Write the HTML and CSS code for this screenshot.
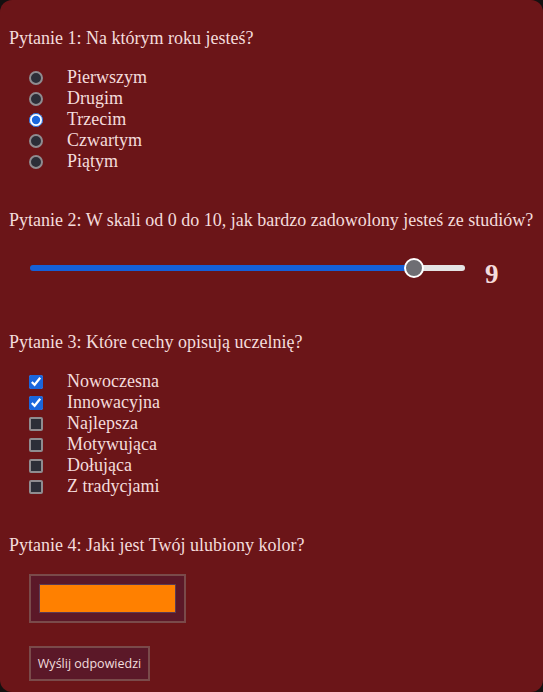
FILE: index.html
```html
<!DOCTYPE html>
<html lang="pl">
<head>
<meta charset="utf-8">
<title>Ankieta</title>
<link rel="stylesheet" href="styles.css">
</head>
<body>
<form class="page">
  <section class="q">
    <p class="q-title">Pytanie 1: Na którym roku jesteś?</p>
    <div class="options">
      <label class="opt"><input type="radio" name="rok" class="radio"><span>Pierwszym</span></label>
      <label class="opt"><input type="radio" name="rok" class="radio"><span>Drugim</span></label>
      <label class="opt"><input type="radio" name="rok" class="radio" checked><span>Trzecim</span></label>
      <label class="opt"><input type="radio" name="rok" class="radio"><span>Czwartym</span></label>
      <label class="opt"><input type="radio" name="rok" class="radio"><span>Piątym</span></label>
    </div>
  </section>
  <section class="q">
    <p class="q-title">Pytanie 2: W skali od 0 do 10, jak bardzo zadowolony jesteś ze studiów?</p>
    <div class="range-row">
      <input type="range" class="range" min="0" max="10" value="9" style="--fill: 88%">
      <span class="range-value">9</span>
    </div>
  </section>
  <section class="q">
    <p class="q-title">Pytanie 3: Które cechy opisują uczelnię?</p>
    <div class="options">
      <label class="opt"><input type="checkbox" class="check" checked><span>Nowoczesna</span></label>
      <label class="opt"><input type="checkbox" class="check" checked><span>Innowacyjna</span></label>
      <label class="opt"><input type="checkbox" class="check"><span>Najlepsza</span></label>
      <label class="opt"><input type="checkbox" class="check"><span>Motywująca</span></label>
      <label class="opt"><input type="checkbox" class="check"><span>Dołująca</span></label>
      <label class="opt"><input type="checkbox" class="check"><span>Z tradycjami</span></label>
    </div>
  </section>
  <section class="q q-last">
    <p class="q-title">Pytanie 4: Jaki jest Twój ulubiony kolor?</p>
    <div class="color-wrap">
      <input type="color" class="color" value="#ff8000">
    </div>
  </section>
  <div class="actions">
    <button type="button" class="submit">Wyślij odpowiedzi</button>
  </div>
</form>
</body>
</html>
```
FILE: styles.css
```css
html, body {
  margin: 0;
  padding: 0;
  background: #141010;
}

.page {
  box-sizing: border-box;
  min-height: 692px;
  margin: 0;
  padding: 28px 9px 10px;
  background: #6b1518;
  border-radius: 12px;
  color: #f4dcdc;
  font-family: "Liberation Serif", "Times New Roman", serif;
  font-size: 18px;
  line-height: 21px;
  color-scheme: dark;
  accent-color: #1a66dd;
}

.q {
  display: flex;
  flex-direction: column;
  margin-bottom: 38px;
}

.q-last {
  margin-bottom: 23px;
}

.q-title {
  margin: 0 0 18px;
}

.options {
  display: flex;
  flex-direction: column;
  padding-left: 20px;
}

.opt {
  display: flex;
  align-items: center;
  height: 21px;
}

.opt span {
  margin-left: 24px;
}

.radio,
.check {
  box-sizing: border-box;
  width: 14px;
  height: 14px;
  margin: 0;
}

.radio:not(:checked),
.check:not(:checked) {
  -webkit-appearance: none;
  appearance: none;
  border: 2px solid #8f8c90;
  background: #2c2e38;
}

.radio:not(:checked) {
  border-radius: 50%;
}

.check:not(:checked) {
  border-radius: 2px;
}

.range-row {
  display: flex;
  align-items: center;
  padding-left: 21px;
  height: 37px;
  margin-bottom: 8px;
}

.range {
  -webkit-appearance: none;
  appearance: none;
  width: 435px;
  height: 6px;
  margin: 0;
  border-radius: 3px;
  background: linear-gradient(to right, #1560d8 0, #1560d8 var(--fill), #e4e4e4 var(--fill), #e4e4e4 100%);
}

.range::-webkit-slider-thumb {
  -webkit-appearance: none;
  appearance: none;
  width: 20px;
  height: 20px;
  border-radius: 50%;
  background: #6e6e73;
  border: 2px solid #ffffff;
  box-sizing: border-box;
}

.range-value {
  margin-left: 20px;
  margin-top: 14px;
  font-size: 27px;
  font-weight: bold;
}

.color-wrap {
  display: flex;
  padding-left: 20px;
}

.color {
  -webkit-appearance: none;
  appearance: none;
  box-sizing: border-box;
  width: 157px;
  height: 49px;
  margin: 0;
  padding: 8px;
  border: 2px solid #7a4a4a;
  background: #5b1828;
  cursor: pointer;
}

.color::-webkit-color-swatch-wrapper {
  padding: 0;
}

.color::-webkit-color-swatch {
  border: 1px solid #5a3a55;
}

.actions {
  padding-left: 20px;
}

.submit {
  box-sizing: border-box;
  width: 121px;
  height: 35px;
  padding: 0;
  border: 2px solid #7a4a4a;
  background: #5b1828;
  color: #f2dede;
  font-family: "Open Sans", "Noto Sans", sans-serif;
  font-size: 12.5px;
}
```
